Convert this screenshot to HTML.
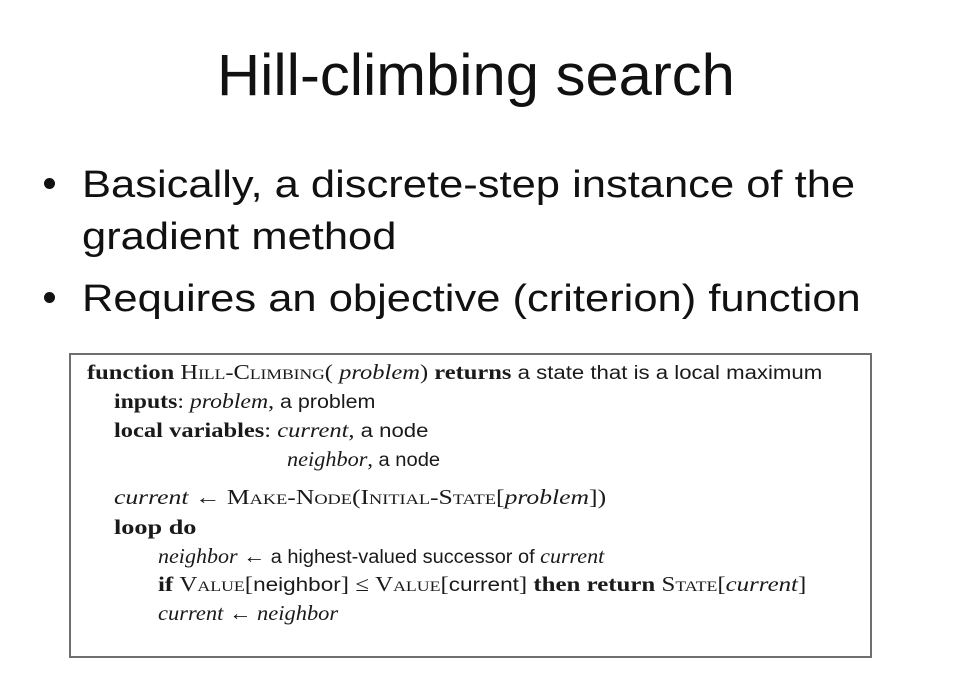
<!DOCTYPE html>
<html><head><meta charset="utf-8"><style>
html,body{margin:0;padding:0;background:#fff;}
body{width:957px;height:692px;position:relative;overflow:hidden;color:#111;}
.t{position:absolute;left:217px;top:43px;font:58px "Liberation Sans",sans-serif;line-height:66px;color:#111;white-space:nowrap;transform:scaleX(1.03);transform-origin:left;}
.b{position:absolute;font:38px "Liberation Sans",sans-serif;line-height:44px;white-space:nowrap;color:#111;transform:scaleX(1.145);transform-origin:left;}
.dot{position:absolute;width:11px;height:11px;border-radius:50%;background:#111;}
.box{position:absolute;left:69px;top:353px;width:803px;height:305px;border:2px solid #6f6f6f;box-sizing:border-box;}
.l{position:absolute;font:21px "Liberation Serif",serif;line-height:20px;white-space:nowrap;color:#1a1a1a;transform-origin:left;}
.s{font-family:"Liberation Sans",sans-serif;font-size:19px;}
.k{font-weight:bold;}
i{font-style:italic;}
.sc{font-variant:small-caps;}
</style></head><body>
<div class="t">Hill-climbing search</div>
<div class="dot" style="left:44px;top:178px"></div>
<div class="b" style="left:82px;top:163px">Basically, a discrete-step instance of the</div>
<div class="b" style="left:82px;top:215px">gradient method</div>
<div class="dot" style="left:44px;top:292px"></div>
<div class="b" style="left:82px;top:277px">Requires an objective (criterion) function</div>
<div class="box"></div>
<div class="l" style="left:87px;top:362px;transform:scaleX(1.168)"><span class="k">function</span> <span class="sc">Hill-Climbing</span>( <i>problem</i>) <span class="k">returns</span> <span class="s">a state that is a local maximum</span></div>
<div class="l" style="left:114px;top:391px;transform:scaleX(1.13)"><span class="k">inputs</span>: <i>problem</i>, <span class="s">a problem</span></div>
<div class="l" style="left:114px;top:420px;transform:scaleX(1.166)"><span class="k">local variables</span>: <i>current</i>, <span class="s">a node</span></div>
<div class="l" style="left:287px;top:449px;transform:scaleX(1.06)"><i>neighbor</i>, <span class="s">a node</span></div>
<div class="l" style="left:114px;top:487px;transform:scaleX(1.22)"><i>current</i> ← <span class="sc">Make-Node</span>(<span class="sc">Initial-State</span>[<i>problem</i>])</div>
<div class="l" style="left:114px;top:517px;transform:scaleX(1.25)"><span class="k">loop do</span></div>
<div class="l" style="left:158px;top:546px;transform:scaleX(1.05)"><i>neighbor</i> ← <span class="s">a highest-valued successor of</span> <i>current</i></div>
<div class="l" style="left:158px;top:574px;transform:scaleX(1.185)"><span class="k">if</span> <span class="sc">Value</span>[<span class="s">neighbor</span>] ≤ <span class="sc">Value</span>[<span class="s">current</span>] <span class="k">then return</span> <span class="sc">State</span>[<i>current</i>]</div>
<div class="l" style="left:158px;top:603px;transform:scaleX(1.07)"><i>current</i> ← <i>neighbor</i></div>
</body></html>
